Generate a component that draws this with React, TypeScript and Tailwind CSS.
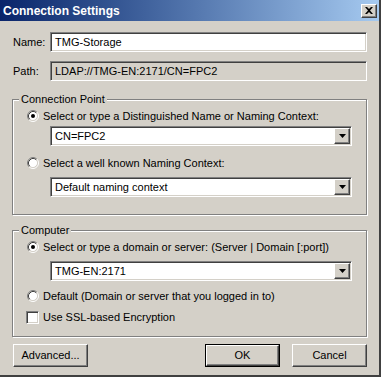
import React from "react";

const sunken =
  "border border-t-[#808080] border-l-[#808080] border-b-white border-r-white shadow-[inset_1px_1px_0_#404040,inset_-1px_-1px_0_#d4d0c8]";
const raised =
  "border border-t-white border-l-white border-b-[#404040] border-r-[#404040] shadow-[inset_-1px_-1px_0_#808080]";

function Radio({ checked }: { checked?: boolean }) {
  return (
    <svg width="12" height="12" viewBox="0 0 12 12" className="shrink-0">
      <circle cx="6" cy="6" r="4.5" fill="#fff" />
      <path d="M2.11 9.89 A5.5 5.5 0 0 1 9.89 2.11" stroke="#808080" fill="none" />
      <path d="M9.89 2.11 A5.5 5.5 0 0 1 2.11 9.89" stroke="#fff" fill="none" />
      <path d="M2.82 9.18 A4.5 4.5 0 0 1 9.18 2.82" stroke="#404040" fill="none" />
      <path d="M9.18 2.82 A4.5 4.5 0 0 1 2.82 9.18" stroke="#d4d0c8" fill="none" />
      {checked && <circle cx="6" cy="6" r="2" fill="#000" />}
    </svg>
  );
}

function Combo({ value }: { value: string }) {
  return (
    <div className={`h-[20px] ml-[37px] mr-[14px] bg-white flex items-center p-[1px] ${sunken}`}>
      <span className="flex-1 pl-[3px] leading-[14px]">{value}</span>
      <div className={`w-[16px] h-[16px] bg-[#d4d0c8] flex items-center justify-center ${raised}`}>
        <svg width="7" height="4" viewBox="0 0 7 4">
          <path d="M0 0 H7 L3.5 4 Z" fill="#000" />
        </svg>
      </div>
    </div>
  );
}

function RadioRow({ checked, label, className }: { checked?: boolean; label: string; className: string }) {
  return (
    <div className={`h-[14px] flex items-center pl-[14px] ${className}`}>
      <Radio checked={checked} />
      <span className="ml-[4px] leading-[14px] whitespace-nowrap">{label}</span>
    </div>
  );
}

function Group({ title, className, children }: { title: string; className: string; children: React.ReactNode }) {
  return (
    <div
      className={`border border-[#808080] shadow-[inset_1px_1px_0_#fff,1px_1px_0_#fff] flex flex-col ${className}`}
    >
      <div className="-mt-[8px] ml-[6px] px-[2px] bg-[#d4d0c8] w-fit leading-[14px] h-[14px]">{title}</div>
      {children}
    </div>
  );
}

function Button({ label, def, className }: { label: string; def?: boolean; className?: string }) {
  if (def) {
    return (
      <div className={`w-[75px] h-[23px] border border-black flex ${className ?? ""}`}>
        <div className={`flex-1 flex items-center justify-center bg-[#d4d0c8] ${raised}`}>{label}</div>
      </div>
    );
  }
  return (
    <div className={`w-[75px] h-[23px] flex items-center justify-center bg-[#d4d0c8] ${raised} ${className ?? ""}`}>
      {label}
    </div>
  );
}

export default function App() {
  return (
    <div className="w-[381px] h-[377px] bg-[#d4d0c8] font-['Liberation_Sans',Arial,sans-serif] text-[11px] text-black flex flex-col border-r-[2px] border-b-[2px] border-r-[#404040] border-b-[#404040] overflow-hidden">
      <div className="h-[21px] shrink-0 bg-gradient-to-r from-[#0a246a] to-[#a6caf0] flex items-center justify-between pl-[3px] pr-[2px]">
        <span className="text-white font-bold text-[12px] leading-[14px]">Connection Settings</span>
        <div className={`w-[16px] h-[14px] bg-[#d4d0c8] flex items-center justify-center ${raised}`}>
          <svg width="8" height="7" viewBox="0 0 8 7">
            <path d="M0 0 H2 L4 2 L6 0 H8 L5 3.5 L8 7 H6 L4 5 L2 7 H0 L3 3.5 Z" fill="#000" />
          </svg>
        </div>
      </div>
      <div className="flex flex-col px-[12px]">
        <div className="mt-[11px] flex items-center">
          <span className="w-[38px] pl-[1px]">Name:</span>
          <div className={`flex-1 h-[20px] bg-white flex items-center pl-[4px] ${sunken}`}>TMG-Storage</div>
        </div>
        <div className="mt-[9px] flex items-center">
          <span className="w-[38px] pl-[1px]">Path:</span>
          <div className={`flex-1 h-[20px] bg-[#d4d0c8] flex items-center pl-[4px] ${sunken}`}>
            LDAP://TMG-EN:2171/CN=FPC2
          </div>
        </div>
        <Group title="Connection Point" className="mt-[18px] pb-[17px]">
          <RadioRow checked label="Select or type a Distinguished Name or Naming Context:" className="mt-[3px]" />
          <div className="mt-[3px]">
            <Combo value="CN=FPC2" />
          </div>
          <RadioRow label="Select a well known Naming Context:" className="mt-[10px]" />
          <div className="mt-[7px]">
            <Combo value="Default naming context" />
          </div>
        </Group>
        <Group title="Computer" className="mt-[15px] pb-[12px]">
          <RadioRow checked label="Select or type a domain or server: (Server | Domain [:port])" className="mt-[3px]" />
          <div className="mt-[7px]">
            <Combo value="TMG-EN:2171" />
          </div>
          <RadioRow label="Default (Domain or server that you logged in to)" className="mt-[8px]" />
          <div className="mt-[7px] h-[14px] flex items-center pl-[13px]">
            <div className={`w-[13px] h-[13px] bg-white ${sunken}`} />
            <span className="ml-[4px] leading-[14px]">Use SSL-based Encryption</span>
          </div>
        </Group>
        <div className="mt-[7px] flex items-center">
          <Button label="Advanced..." className="ml-[1px]" />
          <div className="flex-1" />
          <Button label="OK" def />
          <Button label="Cancel" className="ml-[12px]" />
        </div>
      </div>
    </div>
  );
}
